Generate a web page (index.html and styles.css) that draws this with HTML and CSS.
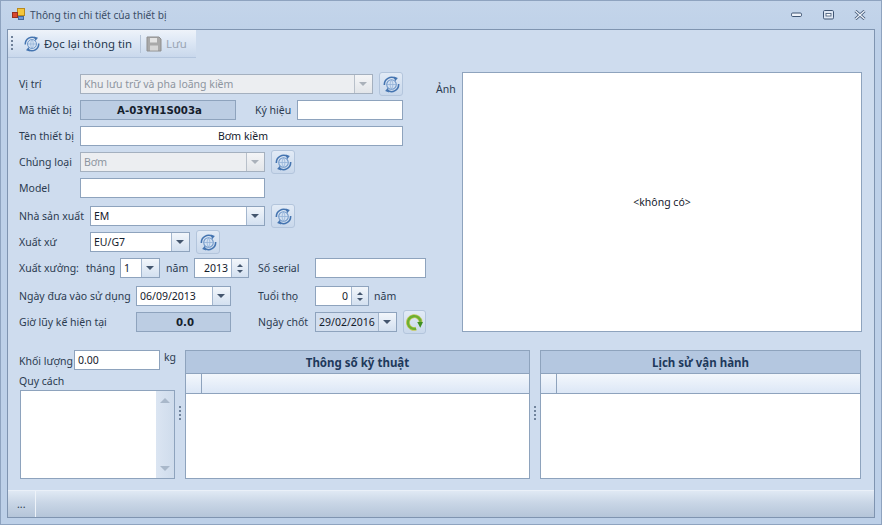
FILE: index.html
```html
<!DOCTYPE html>
<html lang="vi">

<head>
    <meta charset="UTF-8">
    <title>Thông tin chi tiết của thiết bị</title>
    <link rel="stylesheet" href="styles.css">
</head>

<body>
    <svg class="defs" width="0" height="0">
        <symbol id="ico-reload" viewBox="0 0 16 16">
            <circle cx="8" cy="8" r="4.5" fill="#d3e1f2" stroke="#6f97c8" stroke-width="1" />
            <path d="M3.800 8h8.400M8 3.800c-1.800 2.200-1.800 6.200 0 8.400M8 3.800c1.800 2.200 1.800 6.200 0 8.400" fill="none" stroke="#8fb0d6" stroke-width=".7" />
            <path d="M1.300 8.500A6.800 6.800 0 0 1 11.800 2.400" fill="none" stroke="#4474b0" stroke-width="1.500" />
            <path d="M10.200 .4l3.800 1.400-2.600 3.200z" fill="#4474b0" />
            <path d="M14.700 7.500A6.800 6.800 0 0 1 4.200 13.600" fill="none" stroke="#4474b0" stroke-width="1.500" />
            <path d="M5.800 15.600l-3.800-1.400 2.600-3.200z" fill="#4474b0" />
        </symbol>
        <symbol id="ico-go" viewBox="0 0 16 16">
            <path d="M13.800 7.500A6 6 0 1 0 9.500 13.800" fill="none" stroke="#c4c85a" stroke-width="3.600" />
            <path d="M13.800 7.500A6 6 0 1 0 9.500 13.800" fill="none" stroke="#6cb032" stroke-width="2.200" />
            <path d="M10.600 7.500h5.400l-2.600 5.400z" fill="#3f8f20" />
        </symbol>
    </svg>

    <div class="window">
        <div class="titlebar">
            <svg class="app-icon" width="16" height="16" viewBox="0 0 16 16">
                <rect x="6.500" y="1.500" width="7" height="7" fill="#f4c63c" stroke="#b98a1e" />
                <rect x="1.500" y="5.500" width="5" height="5" fill="#d9482f" stroke="#963020" />
                <rect x="7.500" y="9.500" width="5" height="3" fill="#6d97d8" stroke="#44699f" />
            </svg>
            <span class="title-text">Thông tin chi tiết của thiết bị</span>
            <div class="win-buttons">
                <svg width="12" height="6" viewBox="0 0 12 6">
                    <rect x=".5" y="1" width="10" height="3.500" rx="1.200" fill="#eef3fa" stroke="#3f5573" />
                </svg>
                <svg width="11" height="10" viewBox="0 0 11 10">
                    <rect x=".5" y=".5" width="10" height="8.500" rx="1.200" fill="#dfe8f4" stroke="#3f5573" />
                    <rect x="3" y="3.500" width="5" height="2.500" fill="#fff" stroke="#3f5573" stroke-width=".8" />
                </svg>
                <svg width="12" height="10" viewBox="0 0 12 10">
                    <path d="M1.500 1L10.500 9M10.500 1L1.500 9" stroke="#3f5573" stroke-width="3" />
                    <path d="M1.500 1L10.500 9M10.500 1L1.500 9" stroke="#eef3fa" stroke-width="1.400" />
                </svg>
            </div>
        </div>

        <div class="client">
            <div class="toolbar">
                <span class="grip"></span>
                <span class="tool-btn">
                    <svg class="ico16"><use href="#ico-reload" /></svg>
                    Đọc lại thông tin
                </span>
                <span class="tool-sep"></span>
                <span class="tool-btn disabled">
                    <svg width="16" height="16" viewBox="0 0 16 16">
                        <path d="M1 1h12l2 2v12H1z" fill="#a9a9a9" stroke="#8f8f8f" />
                        <rect x="4" y="2" width="7" height="4.500" fill="#e4e4e4" />
                        <rect x="4" y="9.500" width="8" height="5" fill="#d6d6d6" />
                    </svg>
                    Lưu
                </span>
            </div>

            <div class="body">
                <div class="top">
                    <div class="form">
                        <div class="row">
                            <label class="lbl">Vị trí</label>
                            <div class="combo off w293"><span class="val">Khu lưu trữ và pha loãng kiềm</span><span class="drop"></span></div>
                            <span class="icon-btn"><svg class="ico18"><use href="#ico-reload" /></svg></span>
                        </div>
                        <div class="row">
                            <label class="lbl">Mã thiết bị</label>
                            <div class="readout w156">A-03YH1S003a</div>
                            <label class="lbl-side">Ký hiệu</label>
                            <div class="field w106"></div>
                        </div>
                        <div class="row">
                            <label class="lbl">Tên thiết bị</label>
                            <div class="field center w323">Bơm kiềm</div>
                        </div>
                        <div class="row">
                            <label class="lbl">Chủng loại</label>
                            <div class="combo off w185"><span class="val">Bơm</span><span class="drop"></span></div>
                            <span class="icon-btn"><svg class="ico18"><use href="#ico-reload" /></svg></span>
                        </div>
                        <div class="row">
                            <label class="lbl">Model</label>
                            <div class="field w185"></div>
                        </div>
                        <div class="row gap-above">
                            <label class="lbl lbl-wide">Nhà sản xuất</label>
                            <div class="combo w175"><span class="val">EM</span><span class="drop"></span></div>
                            <span class="icon-btn"><svg class="ico18"><use href="#ico-reload" /></svg></span>
                        </div>
                        <div class="row">
                            <label class="lbl lbl-wide">Xuất xứ</label>
                            <div class="combo w100"><span class="val">EU/G7</span><span class="drop"></span></div>
                            <span class="icon-btn"><svg class="ico18"><use href="#ico-reload" /></svg></span>
                        </div>
                        <div class="row">
                            <label class="lbl-made">Xuất xưởng:</label>
                            <label class="lbl-month">tháng</label>
                            <div class="combo w40"><span class="val">1</span><span class="drop"></span></div>
                            <label class="lbl-year">năm</label>
                            <div class="spin w55"><span class="val">2013</span><span class="spin-btns"><i class="up"></i><i class="down"></i></span></div>
                            <label class="lbl-serial">Số serial</label>
                            <div class="field w111"></div>
                        </div>
                        <div class="row gap-above">
                            <label class="lbl-date">Ngày đưa vào sử dụng</label>
                            <div class="combo w95"><span class="val">06/09/2013</span><span class="drop"></span></div>
                            <label class="lbl-right">Tuổi thọ</label>
                            <div class="spin w54"><span class="val">0</span><span class="spin-btns"><i class="up"></i><i class="down"></i></span></div>
                            <label class="lbl-unit">năm</label>
                        </div>
                        <div class="row">
                            <label class="lbl-date">Giờ lũy kế hiện tại</label>
                            <div class="readout w95">0.0</div>
                            <label class="lbl-right">Ngày chốt</label>
                            <div class="combo ro w82"><span class="val">29/02/2016</span><span class="drop"></span></div>
                            <span class="icon-btn small"><svg class="ico18"><use href="#ico-go" /></svg></span>
                        </div>
                    </div>
                    <label class="lbl-photo">Ảnh</label>
                    <div class="photo">&lt;không có&gt;</div>
                </div>

                <div class="bottom">
                    <div class="spec-col">
                        <div class="weight-row">
                            <label class="lbl-weight">Khối lượng</label>
                            <div class="field w86">0.00</div>
                            <span class="kg">kg</span>
                        </div>
                        <label class="lbl-spec">Quy cách</label>
                        <div class="memo">
                            <div class="scroll"><i class="up"></i><i class="down"></i></div>
                        </div>
                    </div>
                    <div class="splitter"><span class="dots"></span></div>
                    <div class="grid grid-tech">
                        <div class="grid-title">Thông số kỹ thuật</div>
                        <div class="grid-head"><span class="corner"></span></div>
                    </div>
                    <div class="splitter"><span class="dots"></span></div>
                    <div class="grid grid-log">
                        <div class="grid-title">Lịch sử vận hành</div>
                        <div class="grid-head"><span class="corner"></span></div>
                    </div>
                </div>
            </div>

            <div class="statusbar">
                <span class="status-cell">...</span>
            </div>
        </div>
    </div>
</body>

</html>
```

FILE: styles.css
```css
/* Blue dialog theme, sized for an 882x525 window */

html,
body {
    margin: 0;
    padding: 0;
    height: 100%;
    overflow: hidden;
}

body {
    font-family: "Noto Sans", "DejaVu Sans", sans-serif;
    font-size: 10.5px;
    color: #2b3b50;
}

.defs {
    position: absolute;
}

label {
    white-space: nowrap;
}

.window {
    box-sizing: border-box;
    width: 882px;
    height: 525px;
    padding: 0 6px 6px 6px;
    display: flex;
    flex-direction: column;
    background: linear-gradient(#c4d5ea, #bdd0e8 40px);
    border: 1px solid #8ea3bf;
}

/* Title bar */
.titlebar {
    height: 28px;
    flex: none;
    display: flex;
    align-items: center;
    margin-left: -6px;
}

.app-icon {
    margin-left: 10px;
    margin-right: 3px;
}

.title-text {
    font-size: 10.2px;
    color: #3a4d66;
}

.win-buttons {
    margin-left: auto;
    margin-right: 9px;
    display: flex;
    align-items: center;
    gap: 20px;
}

/* Client area */
.client {
    flex: 1;
    display: flex;
    flex-direction: column;
    background-color: #cedcee;
    border: 1px solid #7f94b0;
}

.toolbar {
    width: 188px;
    height: 28px;
    flex: none;
    display: flex;
    align-items: center;
    background: linear-gradient(#eef3fa, #dbe6f4 50%, #c9d8ec);
    border-bottom: 1px solid #b4c6de;
    box-sizing: border-box;
}

.grip {
    width: 2px;
    height: 15px;
    margin-left: 3px;
    background: repeating-linear-gradient(#6f8199 0 2px, transparent 2px 4px);
}

.tool-btn {
    display: flex;
    align-items: center;
    gap: 4px;
    margin-left: 11px;
    font-size: 11.4px;
    color: #26384e;
}

.tool-btn.disabled {
    margin-left: 5px;
    color: #9aa5b3;
}

.tool-sep {
    width: 1px;
    height: 18px;
    margin-left: 8px;
    background-color: #b5c4d8;
}

.ico16 {
    width: 16px;
    height: 16px;
}

.ico18 {
    width: 17px;
    height: 17px;
}

.body {
    flex: 1;
    display: flex;
    flex-direction: column;
    padding: 14px 0 0 11px;
}

.top {
    display: flex;
    height: 262px;
}

.form {
    width: 416px;
    display: flex;
    flex-direction: column;
    gap: 2px;
}

.row {
    height: 24px;
    display: flex;
    align-items: center;
}

.row.gap-above {
    margin-top: 2px;
}

/* Labels */
.lbl {
    width: 61px;
    flex: none;
}

.lbl-wide {
    width: 71px;
}

.lbl-side {
    width: 61px;
    padding-left: 19px;
    box-sizing: border-box;
}

.lbl-made {
    width: 67px;
}

.lbl-month {
    width: 34px;
}

.lbl-year {
    width: 34px;
    padding-left: 6px;
    box-sizing: border-box;
}

.lbl-serial {
    width: 66px;
    padding-left: 9px;
    box-sizing: border-box;
}

.lbl-date {
    width: 117px;
}

.lbl-right {
    width: 84px;
    padding-left: 27px;
    box-sizing: border-box;
}

.lbl-unit {
    margin-left: 5px;
}

.lbl-photo {
    width: 27px;
    padding-left: 1px;
    box-sizing: border-box;
    margin-top: 10px;
}

/* Inputs */
.field,
.readout,
.combo,
.spin {
    box-sizing: border-box;
    height: 20px;
    flex: none;
    border: 1px solid #8ea3bd;
    background-color: #fff;
    color: #15202c;
    display: flex;
    align-items: center;
    padding-left: 3px;
}

.field.center {
    justify-content: center;
}

.readout {
    justify-content: center;
    background-color: #bccde3;
    font-family: "DejaVu Sans", sans-serif;
    font-size: 10.2px;
    font-weight: bold;
}

.w40 { width: 40px; }
.w54 { width: 54px; }
.w55 { width: 55px; }
.w82 { width: 82px; }
.w86 { width: 86px; }
.w95 { width: 95px; }
.w100 { width: 100px; }
.w106 { width: 106px; }
.w111 { width: 111px; }
.w156 { width: 156px; }
.w175 { width: 175px; }
.w185 { width: 185px; }
.w293 { width: 293px; }
.w323 { width: 323px; }

.val {
    flex: 1;
    white-space: nowrap;
    overflow: hidden;
}

.combo {
    padding-right: 0;
}

.drop {
    width: 17px;
    height: 100%;
    flex: none;
    position: relative;
    border-left: 1px solid #a3b6ce;
    background: linear-gradient(#f2f6fb, #d3e0f0);
}

.drop::after {
    content: "";
    position: absolute;
    left: 4px;
    top: 7px;
    border: 4px solid transparent;
    border-top: 4px solid #44566e;
    border-bottom: 0;
}

.combo.off {
    background-color: #eceef1;
    border-color: #a4b0bf;
    color: #8d959f;
}

.combo.off .drop {
    background: linear-gradient(#f4f5f7, #e2e5e9);
    border-left-color: #b8c0ca;
}

.combo.off .drop::after {
    border-top-color: #aab1ba;
}

.combo.ro {
    background-color: #d3dfef;
}

.spin .val {
    text-align: right;
    padding-right: 3px;
}

.spin-btns {
    width: 16px;
    height: 100%;
    flex: none;
    display: flex;
    flex-direction: column;
    align-items: center;
    justify-content: center;
    gap: 3px;
    border-left: 1px solid #a3b6ce;
    background: linear-gradient(#f2f6fb, #d3e0f0);
}

.up,
.down {
    display: block;
    border: 3px solid transparent;
    border-top: 0;
    border-bottom: 3px solid #44566e;
}

.down {
    border-bottom: 0;
    border-top: 3px solid #44566e;
}

.icon-btn {
    box-sizing: border-box;
    width: 24px;
    height: 24px;
    margin-left: 6px;
    flex: none;
    display: flex;
    align-items: center;
    justify-content: center;
    border: 1px solid #b3c5dc;
    border-radius: 3px;
    background: linear-gradient(#e2ebf6, #c9d8eb);
}

.icon-btn.small {
    width: 23px;
}

.photo {
    box-sizing: border-box;
    width: 400px;
    height: 260px;
    display: flex;
    align-items: center;
    justify-content: center;
    background-color: #fff;
    border: 1px solid #8ea3bd;
    color: #15202c;
}

/* Bottom part */
.bottom {
    height: 129px;
    margin-top: 16px;
    display: flex;
}

.spec-col {
    width: 156px;
    flex: none;
    display: flex;
    flex-direction: column;
}

.weight-row {
    height: 20px;
    display: flex;
}

.lbl-weight {
    width: 55px;
    flex: none;
    line-height: 22px;
}

.kg {
    margin-left: 4px;
    line-height: 14px;
}

.lbl-spec {
    margin-top: 3px;
    height: 17px;
    line-height: 17px;
}

.memo {
    box-sizing: border-box;
    flex: 1;
    margin-left: 1px;
    display: flex;
    justify-content: flex-end;
    background-color: #fff;
    border: 1px solid #8ea3bd;
}

.scroll {
    width: 18px;
    display: flex;
    flex-direction: column;
    align-items: center;
    justify-content: space-between;
    padding: 7px 0;
    box-sizing: border-box;
    background: linear-gradient(90deg, #dbe5f2, #cfdcec);
}

.scroll .up {
    border-width: 0 5px 5px;
    border-bottom-color: #a9b8ca;
}

.scroll .down {
    border-width: 5px 5px 0;
    border-top-color: #a9b8ca;
}

.splitter {
    width: 10px;
    flex: none;
    position: relative;
}

.dots {
    position: absolute;
    left: 4px;
    top: 56px;
    width: 2px;
    height: 16px;
    background: repeating-linear-gradient(#71849c 0 2px, transparent 2px 4px);
}

.grid {
    box-sizing: border-box;
    background-color: #fff;
    border: 1px solid #8ea3bd;
}

.grid-tech {
    width: 345px;
}

.grid-log {
    width: 321px;
}

.grid-title {
    height: 22px;
    line-height: 23px;
    text-align: center;
    font-weight: bold;
    font-size: 11.5px;
    color: #1e395b;
    background-color: #b4c7e0;
    border-bottom: 1px solid #8ea3bd;
}

.grid-head {
    height: 19px;
    background: linear-gradient(#f3f7fc, #dce7f6);
    border-bottom: 1px solid #8ea3bd;
}

.corner {
    display: block;
    width: 15px;
    height: 100%;
    border-right: 1px solid #8ea3bd;
}

/* Status bar */
.statusbar {
    height: 27px;
    flex: none;
    display: flex;
    align-items: center;
    background: linear-gradient(#e0e9f4, #c9d6e6 45%, #b5c5d9);
    border-top: 1px solid #eaf0f8;
    box-sizing: border-box;
}

.status-cell {
    box-sizing: border-box;
    width: 28px;
    height: 100%;
    padding-left: 9px;
    line-height: 26px;
    border-right: 1px solid #eef3f9;
}
```
